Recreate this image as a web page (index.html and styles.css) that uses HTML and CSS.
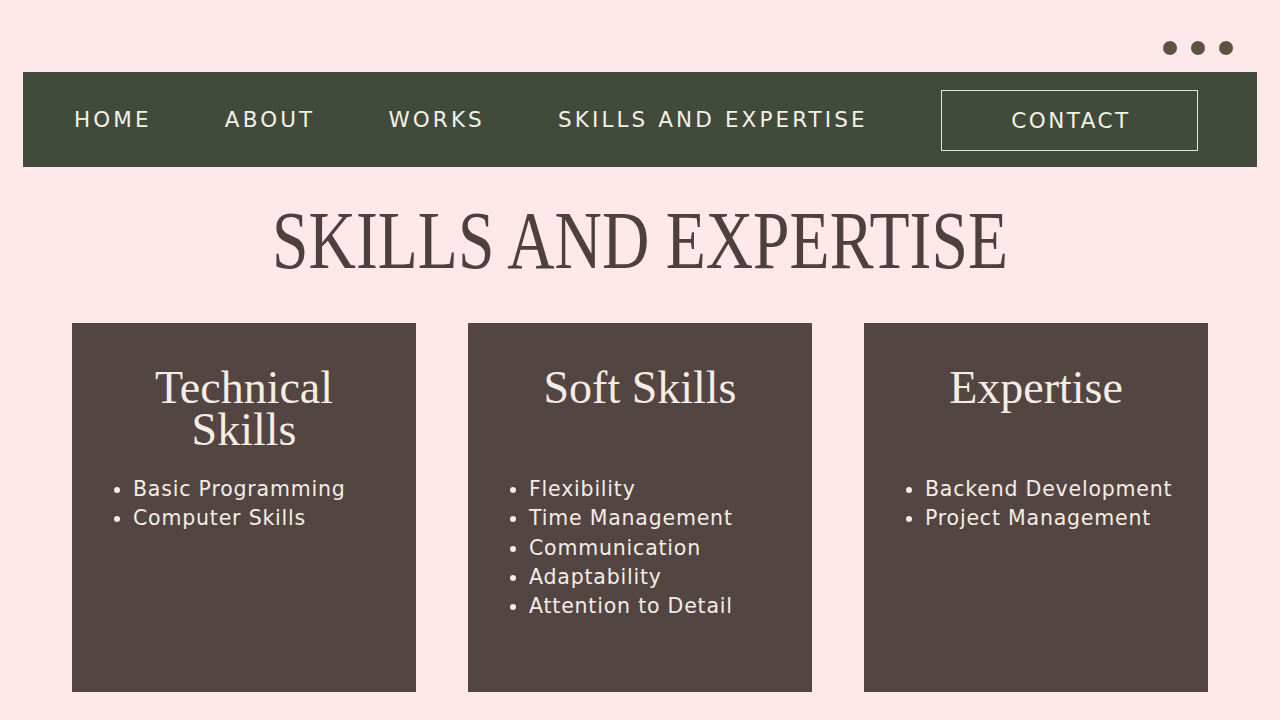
FILE: index.html
```html
<!DOCTYPE html>
<html lang="en">
<head>
<meta charset="utf-8">
<title>Skills and Expertise</title>
<link rel="stylesheet" href="styles.css">
</head>
<body>
<div class="page">
  <div class="dots"><span class="dot"></span><span class="dot"></span><span class="dot"></span></div>
  <nav class="nav">
    <a class="nav-link" href="#">HOME</a>
    <a class="nav-link" href="#">ABOUT</a>
    <a class="nav-link" href="#">WORKS</a>
    <a class="nav-link" href="#">SKILLS AND EXPERTISE</a>
    <a class="nav-link nav-button" href="#">CONTACT</a>
  </nav>
  <h1 class="title">SKILLS AND EXPERTISE</h1>
  <section class="cards">
    <div class="card">
      <h2 class="card-title">Technical<br>Skills</h2>
      <ul class="card-list">
        <li>Basic Programming</li>
        <li>Computer Skills</li>
      </ul>
    </div>
    <div class="card">
      <h2 class="card-title">Soft Skills</h2>
      <ul class="card-list">
        <li>Flexibility</li>
        <li>Time Management</li>
        <li>Communication</li>
        <li>Adaptability</li>
        <li>Attention to Detail</li>
      </ul>
    </div>
    <div class="card">
      <h2 class="card-title">Expertise</h2>
      <ul class="card-list">
        <li>Backend Development</li>
        <li>Project Management</li>
      </ul>
    </div>
  </section>
</div>
</body>
</html>
```

FILE: styles.css
```css
html, body {
  margin: 0;
  padding: 0;
}
body {
  background: #ffe8e9;
  width: 1280px;
  height: 720px;
  overflow: hidden;
}
.page {
  display: flex;
  flex-direction: column;
}
.dots {
  height: 72px;
  display: flex;
  justify-content: flex-end;
  align-items: flex-start;
  gap: 14px;
  padding: 41px 47px 0 0;
  box-sizing: border-box;
}
.dot {
  width: 14px;
  height: 14px;
  border-radius: 50%;
  background: #5c5242;
}
.nav {
  margin: 0 23px;
  height: 95px;
  background: #414b3b;
  display: flex;
  align-items: center;
  justify-content: space-between;
  padding: 0 59px 0 51px;
}
.nav-link {
  font-family: "DejaVu Sans", "Noto Sans", sans-serif;
  font-size: 21.5px;
  font-weight: 400;
  letter-spacing: 3.1px;
  color: #f4f1e8;
  text-decoration: none;
  white-space: nowrap;
}
.nav-button {
  border: 1.5px solid #e6e4d8;
  width: 257px;
  height: 61px;
  box-sizing: border-box;
  display: flex;
  align-items: center;
  justify-content: center;
  padding-left: 3px;
  margin-top: 2px;
  letter-spacing: 2.5px;
}
.title {
  margin: 29px 0 0;
  text-align: center;
  font-family: "Liberation Serif", "DejaVu Serif", serif;
  font-weight: 400;
  font-size: 82px;
  line-height: 90px;
  color: #4e403c;
  transform: scaleX(0.8);
}
.cards {
  display: flex;
  gap: 52px;
  padding-left: 72px;
  margin-top: 37px;
}
.card {
  width: 344px;
  height: 369px;
  background: #534541;
  box-sizing: border-box;
  padding-top: 44px;
  color: #f3ede6;
}
.card-title {
  margin: 0;
  height: 108px;
  text-align: center;
  font-family: "Liberation Serif", "DejaVu Serif", serif;
  font-weight: 400;
  font-size: 46px;
  line-height: 42px;
}
.card-list {
  margin: 0;
  padding-left: 61px;
  font-family: "DejaVu Sans", "Noto Sans", sans-serif;
  font-size: 20.5px;
  line-height: 29.3px;
  letter-spacing: 0.8px;
}
```
